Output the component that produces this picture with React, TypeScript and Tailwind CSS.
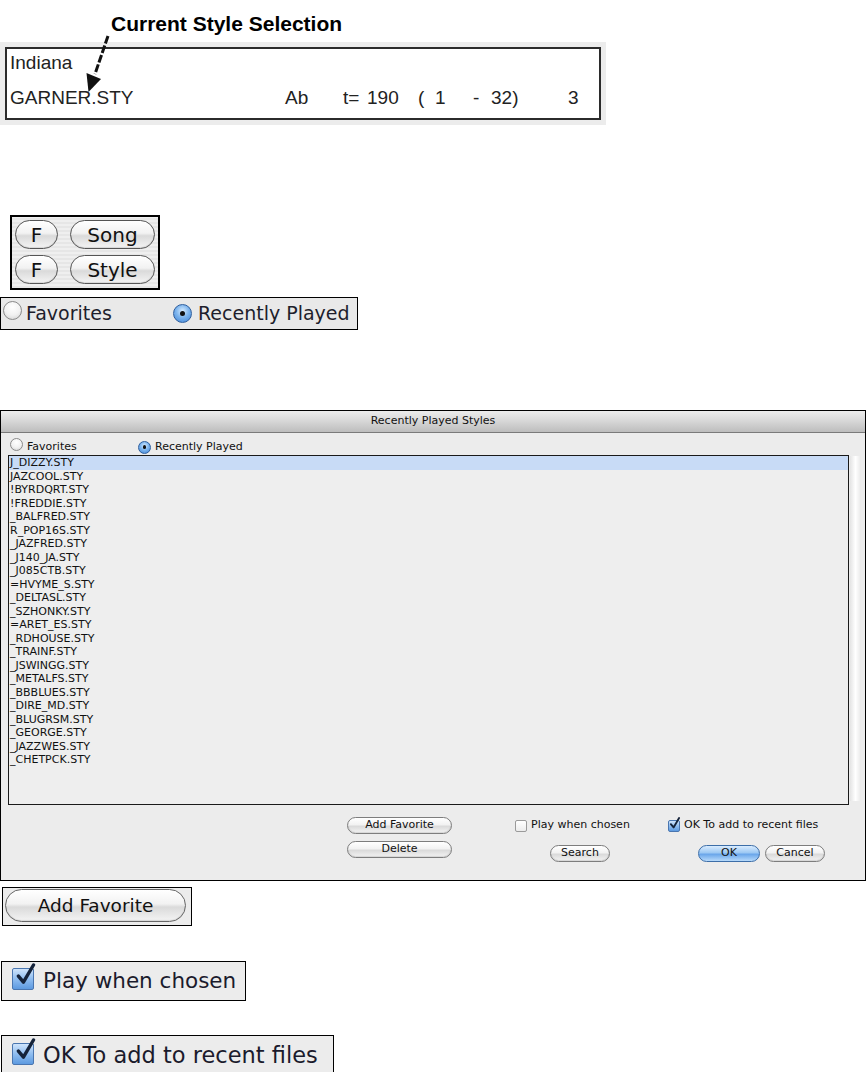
import React from 'react'

const STYLES = [
  'J_DIZZY.STY', 'JAZCOOL.STY', '!BYRDQRT.STY', '!FREDDIE.STY', '_BALFRED.STY', 'R_POP16S.STY',
  '_JAZFRED.STY', '_J140_JA.STY', '_J085CTB.STY', '=HVYME_S.STY', '_DELTASL.STY', '_SZHONKY.STY',
  '=ARET_ES.STY', '_RDHOUSE.STY', '_TRAINF.STY', '_JSWINGG.STY', '_METALFS.STY', '_BBBLUES.STY',
  '_DIRE_MD.STY', '_BLUGRSM.STY', '_GEORGE.STY', '_JAZZWES.STY', '_CHETPCK.STY',
]

const AQUA = 'font-["DejaVu_Sans",sans-serif]'

function Pill({ children, className = '' }: { children: React.ReactNode; className?: string }) {
  return (
    <div
      className={`flex items-center justify-center whitespace-nowrap rounded-full border border-[#7d7d7d] bg-[linear-gradient(180deg,#ffffff_0%,#f2f2f2_45%,#dadada_55%,#f4f4f4_100%)] shadow-[inset_0_-1px_1px_rgba(0,0,0,0.12)] text-[#111] ${className}`}
    >
      {children}
    </div>
  )
}

function Radio({ on, size = 13 }: { on?: boolean; size?: number }) {
  return (
    <span
      className={`inline-flex shrink-0 items-center justify-center rounded-full border ${on ? 'border-[#2f5f9e] bg-[radial-gradient(circle_at_50%_35%,#d8ecff_0%,#7fb6ee_45%,#3c82d6_100%)]' : 'border-[#8a8a8a] bg-[radial-gradient(circle_at_50%_30%,#ffffff_0%,#f1f1f1_55%,#cfcfcf_100%)]'}`}
      style={{ width: size, height: size }}
    >
      {on && <span className="rounded-full bg-[#111]" style={{ width: size * 0.3, height: size * 0.3 }} />}
    </span>
  )
}

function Check({ on, size = 12 }: { on?: boolean; size?: number }) {
  return (
    <span className="relative inline-block shrink-0" style={{ width: size, height: size }}>
      <span
        className={`absolute inset-0 rounded-[2px] border ${on ? 'border-[#4a76b0] bg-[linear-gradient(180deg,#cfe4fb_0%,#8fbdf0_50%,#5d9ae0_100%)]' : 'border-[#9a9a9a] bg-[linear-gradient(180deg,#ffffff_0%,#ececec_100%)]'}`}
      />
      {on && (
        <svg className="absolute" style={{ left: size * 0.12, top: -size * 0.22, width: size * 0.95, height: size * 1.05 }} viewBox="0 0 20 23">
          <path d="M3 13 L8 19 L18 2" fill="none" stroke="#15233a" strokeWidth="3.4" strokeLinecap="round" strokeLinejoin="round" />
        </svg>
      )}
    </span>
  )
}

export default function App() {
  return (
    <div className="w-[867px] h-[1072px] overflow-hidden bg-white font-['Liberation_Sans',Arial,sans-serif] text-black">
      {/* Current style selection */}
      <div className="relative">
        <div className="pt-[11px] pl-[111px] text-[21px] leading-[26px] font-bold">Current Style Selection</div>
        <div className="mt-[5px] w-[606px] h-[83px] bg-[#ececec] pt-[5px] pl-[5px]">
          <div className="w-[596px] h-[73px] border-2 border-[#2b2b2b] bg-white pt-[3px] pl-[3px] text-[19px] leading-[22px] text-[#222]">
            <div>Indiana</div>
            <div className="mt-[13px] flex whitespace-pre">
              <span className="w-[275px]">GARNER.STY</span>
              <span className="w-[58px]">Ab</span>
              <span className="w-[24px]">t=</span>
              <span className="w-[51px]">190</span>
              <span className="w-[17px]">(</span>
              <span className="w-[38px]">1</span>
              <span className="w-[18px]">-</span>
              <span className="w-[77px]">32)</span>
              <span>3</span>
            </div>
          </div>
        </div>
        <svg className="absolute left-0 top-0 w-[130px] h-[100px]" viewBox="0 0 130 100">
          <line x1="108" y1="36" x2="95" y2="74" stroke="#111" strokeWidth="3" strokeDasharray="8 2" />
          <polygon points="86.5,73 101,79 88.5,92" fill="#111" />
        </svg>
      </div>

      {/* F / Song / Style */}
      <div className="mt-[90px] ml-[10px] w-[150px] h-[75px] border-2 border-black bg-[repeating-linear-gradient(0deg,#e6e6e6_0px,#e6e6e6_2px,#efefef_2px,#efefef_4px)] pt-[3px] pl-[3px]">
        {['Song', 'Style'].map((label, i) => (
          <div key={label} className={`flex gap-[12px] ${i ? 'mt-[6px]' : ''}`}>
            <Pill className={`${AQUA} w-[43px] h-[29px] text-[20px] border-[#555]`}>F</Pill>
            <Pill className={`${AQUA} w-[85px] h-[29px] text-[20px] border-[#555]`}>{label}</Pill>
          </div>
        ))}
      </div>

      {/* radio strip */}
      <div className={`${AQUA} mt-[7px] w-[358px] h-[33px] border border-black bg-[#e9e9e9] flex items-center whitespace-nowrap text-[19px] text-[#1e1e2c]`}>
        <span className="ml-[2px]"><Radio size={19} /></span>
        <span className="ml-[4px] w-[147px]">Favorites</span>
        <Radio on size={19} />
        <span className="ml-[6px]">Recently Played</span>
      </div>

      {/* dialog */}
      <div className={`${AQUA} mt-[80px] w-[866px] border border-black bg-[#ececec] text-[11px] text-[#111]`}>
        <div className="h-[22px] border-b border-[#7a7a7a] bg-[linear-gradient(180deg,#ececec_0%,#d6d6d6_50%,#bdbdbd_100%)] flex items-center justify-center">
          Recently Played Styles
        </div>
        <div className="pt-[7px] h-[21px] flex items-center">
          <span className="ml-[9px]"><Radio size={13} /></span>
          <span className="ml-[4px] w-[111px]">Favorites</span>
          <Radio on size={13} />
          <span className="ml-[4px]">Recently Played</span>
        </div>
        <div className="mt-[1px] flex">
          <div className="ml-[7px] w-[841px] h-[350px] border border-[#1a1a1a] bg-[#eeeeee]">
            {STYLES.map((s, i) => (
              <div key={s} className={`h-[13.5px] leading-[13.5px] pl-[1px] ${i === 0 ? 'bg-[#c8dbf6]' : ''}`}>
                {s}
              </div>
            ))}
          </div>
          <div className="ml-[1px] mt-[1px] w-[11px] h-[345px] bg-[linear-gradient(90deg,#e4e4e4_0%,#ffffff_50%,#e9e9e9_100%)]" />
        </div>
        <div className="pt-[12px] pb-[18px] flex">
          <div className="ml-[346px] w-[105px] flex flex-col gap-[7px]">
            <Pill className="h-[17px]">Add Favorite</Pill>
            <Pill className="h-[17px]">Delete</Pill>
          </div>
          <div className="ml-[63px] w-[153px]">
            <div className="h-[17px] flex items-center">
              <Check size={12} />
              <span className="ml-[4px]">Play when chosen</span>
            </div>
            <Pill className="mt-[11px] ml-[35px] w-[60px] h-[17px]">Search</Pill>
          </div>
          <div>
            <div className="h-[17px] flex items-center">
              <Check on size={12} />
              <span className="ml-[4px]">OK To add to recent files</span>
            </div>
            <div className="mt-[11px] ml-[30px] flex gap-[5px]">
              <div className="w-[62px] h-[17px] rounded-full border border-[#3d6ea8] bg-[linear-gradient(180deg,#d9ecff_0%,#9cc8f3_45%,#6aa6ea_55%,#b7dafb_100%)] flex items-center justify-center">OK</div>
              <Pill className="w-[60px] h-[17px]">Cancel</Pill>
            </div>
          </div>
        </div>
      </div>

      {/* Add Favorite */}
      <div className="mt-[6px] ml-[2px] w-[190px] h-[39px] border border-black bg-[#ececec] pt-[1px] pl-[2px]">
        <Pill className={`${AQUA} w-[181px] h-[33px] text-[18.5px] border-[#666]`}>Add Favorite</Pill>
      </div>

      {/* Play when chosen */}
      <div className={`${AQUA} mt-[35px] ml-[1px] w-[245px] h-[40px] border border-black bg-[#ececec] flex items-center whitespace-nowrap text-[21.5px] text-[#1b1b2c]`}>
        <span className="ml-[10px] mt-[4px]"><Check on size={22} /></span>
        <span className="ml-[9px]">Play when chosen</span>
      </div>

      {/* OK To add to recent files */}
      <div className={`${AQUA} mt-[34px] ml-[1px] w-[333px] h-[41px] border border-black bg-[#ececec] flex items-center whitespace-nowrap text-[22.5px] text-[#1b1b2c]`}>
        <span className="ml-[10px] mt-[4px]"><Check on size={22} /></span>
        <span className="ml-[9px]">OK To add to recent files</span>
      </div>
    </div>
  )
}
